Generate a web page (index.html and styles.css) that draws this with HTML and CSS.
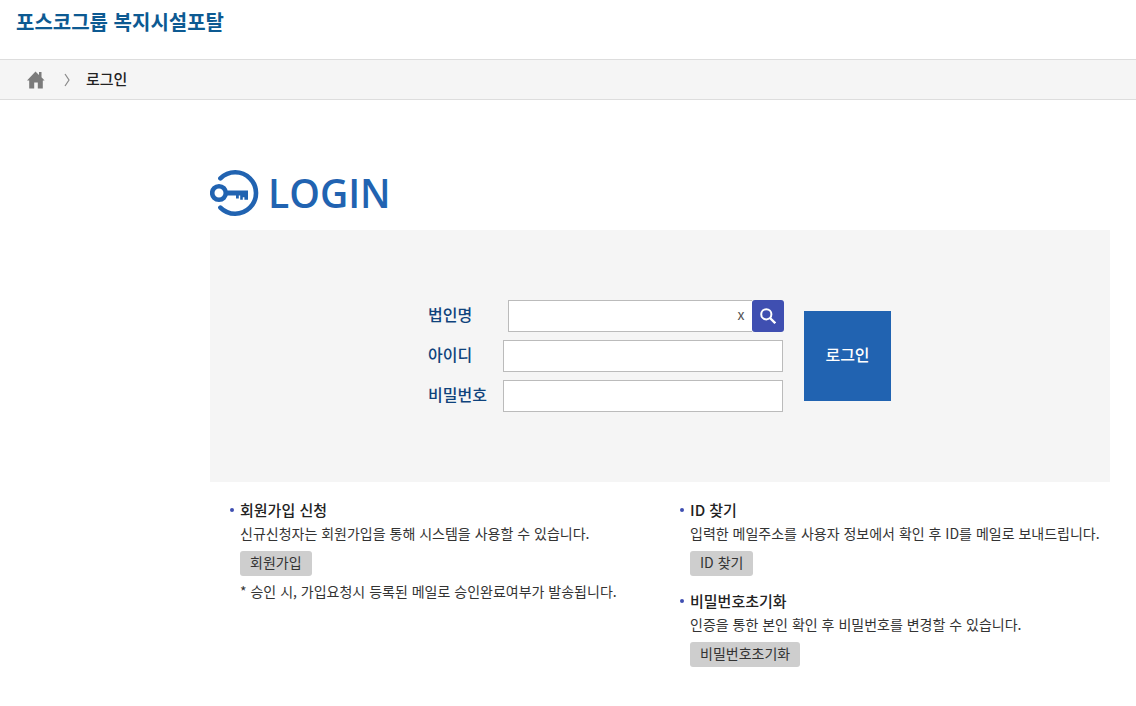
FILE: index.html
```html
<!DOCTYPE html>
<html lang="ko">
<head>
    <meta charset="UTF-8">
    <meta name="viewport" content="width=device-width, initial-scale=1.0">
    <title>포스코그룹 복지시설포탈</title>
    <link rel="stylesheet" href="styles.css">
</head>
<body>

<header class="header">
    <a href="#" class="site-name">포스코그룹 복지시설포탈</a>
</header>

<nav class="location">
    <a href="#" class="home" aria-label="홈">
        <svg width="18" height="18" viewBox="0 0 18 18">
            <path fill="#7b7b7b" d="M8.5 0.5 12 4V1h2.5v5.2L17.6 9.5H15.8V17.5H10.8V11.5H7.2V17.5H2.2V9.5H0z"/>
        </svg>
    </a>
    <svg class="arrow" width="6" height="14" viewBox="0 0 6 14">
        <path fill="none" stroke="#888" stroke-width="1.2" d="M1 1l4 6-4 6"/>
    </svg>
    <span class="current">로그인</span>
</nav>

<main class="content">
    <div class="title">
        <svg width="49" height="48" viewBox="0 0 49 48" fill="none" stroke="#2163b1">
            <path stroke-width="4.6" stroke-linecap="round" d="M9.4 9.4A20.8 20.8 0 1 1 9.4 38.6" transform="translate(1 0)"/>
            <circle cx="9" cy="24" r="6.8" stroke-width="4.6"/>
            <path fill="#2163b1" stroke="none" d="M16 21.4h22v9.4h-3.6v-2.6h-1.6v2.6h-2.6v-4.4h-1.4v3h-2.8v-3H16z"/>
        </svg>
        <h1>LOGIN</h1>
    </div>

    <form class="login-box">
        <div class="fields">
            <div class="row">
                <label for="company">법인명</label>
                <div class="search">
                    <input type="text" id="company">
                    <button type="button" class="clear" aria-label="지우기">x</button>
                    <button type="button" class="find" aria-label="검색">
                        <svg width="16" height="16" viewBox="0 0 16 16" fill="none" stroke="#fff">
                            <circle cx="6.3" cy="6.3" r="5.1" stroke-width="2"/>
                            <path stroke-width="2.4" d="M10 10l5.3 5.2"/>
                        </svg>
                    </button>
                </div>
            </div>
            <div class="row">
                <label for="userId">아이디</label>
                <input type="text" id="userId">
            </div>
            <div class="row">
                <label for="password">비밀번호</label>
                <input type="password" id="password">
            </div>
        </div>
        <button type="submit" class="login-btn">로그인</button>
    </form>

    <div class="guide">
        <div class="guide-col">
            <section>
                <h2>회원가입 신청</h2>
                <p>신규신청자는 회원가입을 통해 시스템을 사용할 수 있습니다.</p>
                <button type="button" class="btn">회원가입</button>
                <p class="note">* 승인 시, 가입요청시 등록된 메일로 승인완료여부가 발송됩니다.</p>
            </section>
        </div>
        <div class="guide-col">
            <section>
                <h2>ID 찾기</h2>
                <p>입력한 메일주소를 사용자 정보에서 확인 후 ID를 메일로 보내드립니다.</p>
                <button type="button" class="btn">ID 찾기</button>
            </section>
            <section>
                <h2>비밀번호초기화</h2>
                <p>인증을 통한 본인 확인 후 비밀번호를 변경할 수 있습니다.</p>
                <button type="button" class="btn">비밀번호초기화</button>
            </section>
        </div>
    </div>
</main>

</body>
</html>
```
FILE: styles.css
```css
* {
    box-sizing: border-box;
}
body {
    margin: 0;
    font-family: "Noto Sans CJK KR", sans-serif;
    font-size: 14px;
    line-height: 20px;
    color: #333;
    background-color: #fff;
}
button, input {
    font-family: inherit;
}
button {
    padding: 0;
    border: none;
    cursor: pointer;
}
.header {
    padding: 7px 16px 22px;
}
.site-name {
    display: block;
    font-size: 20px;
    line-height: 30px;
    font-weight: bold;
    color: #0d5a92;
    text-decoration: none;
}
.location {
    display: flex;
    align-items: center;
    height: 41px;
    padding: 0 27px;
    border-top: 1px solid #ddd;
    border-bottom: 1px solid #ddd;
    background-color: #f5f5f5;
}
.home {
    display: block;
    margin-right: 19px;
}
.arrow {
    margin-right: 16px;
}
.home svg, .title svg, .find svg {
    display: block;
}
.current {
    padding-bottom: 2px;
    font-size: 15px;
    font-weight: 500;
    color: #222;
}
.content {
    max-width: 1110px;
    padding: 66px 0 40px 210px;
}
.title {
    display: flex;
    align-items: center;
    gap: 9px;
    height: 54px;
    margin-bottom: 10px;
}
.title h1 {
    margin: 0;
    font-family: "Open Sans", sans-serif;
    font-size: 39px;
    line-height: 54px;
    font-weight: 600;
    color: #2163b1;
}
.login-box {
    display: flex;
    justify-content: center;
    align-items: center;
    gap: 20px;
    padding: 70px 21px 70px 20px;
    background-color: #f5f5f5;
}
.fields {
    display: grid;
    gap: 8px;
    width: 356px;
}
.row {
    display: flex;
    align-items: center;
}
.row label {
    width: 75px;
    padding-bottom: 5px;
    font-size: 16px;
    font-weight: 500;
    color: #0f437c;
}
.row input {
    width: 280px;
    height: 32px;
    padding: 0 8px;
    border: 1px solid #bbb;
    background-color: #fff;
    font-size: 14px;
}
.search {
    position: relative;
    display: flex;
    flex: 1;
    padding-left: 5px;
}
.search input {
    flex: 1;
    width: auto;
    min-width: 0;
    padding-right: 24px;
    border-right: none;
}
/* 입력창 위에 표시되는 지우기 버튼 */
.clear {
    position: absolute;
    top: 4px;
    right: 38px;
    width: 10px;
    height: 20px;
    background: none;
    font-size: 14px;
    line-height: 20px;
    color: #555;
}
.find {
    display: flex;
    justify-content: center;
    align-items: center;
    width: 32px;
    height: 32px;
    border-radius: 3px;
    background-color: #3f4fb1;
}
.login-btn {
    width: 87px;
    height: 90px;
    padding-bottom: 5px;
    background-color: #2163b1;
    font-size: 16px;
    font-weight: 500;
    color: #fff;
}
.guide {
    display: grid;
    grid-template-columns: 1fr 1fr;
    padding-top: 18px;
}
.guide-col {
    display: grid;
    align-content: start;
    gap: 15px;
    padding-left: 20px;
    white-space: nowrap;
}
.guide section {
    padding-left: 10px;
}
.guide h2 {
    display: flex;
    align-items: center;
    margin: 0 0 3px -10px;
    font-size: 15px;
    line-height: 20px;
    font-weight: 500;
    color: #222;
}
.guide h2::before {
    content: "";
    width: 4px;
    height: 4px;
    margin-right: 6px;
    border-radius: 50%;
    background-color: #3f4fb1;
}
.guide p {
    margin: 0 0 8px;
}
.guide .note {
    margin: 5px 0 0;
}
.btn {
    display: block;
    height: 25px;
    padding: 0 10px 4px;
    border-radius: 3px;
    background-color: #cecece;
    font-size: 14px;
    line-height: 20px;
    color: #333;
}
```
